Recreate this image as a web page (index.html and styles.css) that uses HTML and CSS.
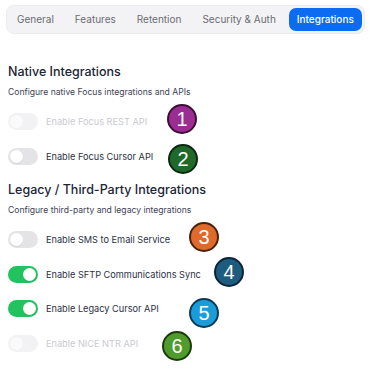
FILE: index.html
```html
<!DOCTYPE html>
<html lang="en">
<head>
  <meta charset="UTF-8" />
  <title>Settings - Integrations</title>
  <link rel="stylesheet" href="styles.css">
</head>
<body>

<div id="page">
  <!-- Onglets -->
  <div class="tabs">
    <div class="tab">General</div>
    <div class="tab">Features</div>
    <div class="tab">Retention</div>
    <div class="tab">Security &amp; Auth</div>
    <div class="tab active">Integrations</div>
  </div>

  <!-- Native -->
  <div class="section first">
    <h2>Native Integrations</h2>
    <p class="desc">Configure native Focus integrations and APIs</p>
    <div class="row disabled"><span class="switch"></span><span class="label">Enable Focus REST API</span></div>
    <div class="row"><span class="switch"></span><span class="label">Enable Focus Cursor API</span></div>
  </div>

  <!-- Legacy -->
  <div class="section">
    <h2>Legacy / Third-Party Integrations</h2>
    <p class="desc">Configure third-party and legacy integrations</p>
    <div class="row"><span class="switch"></span><span class="label">Enable SMS to Email Service</span></div>
    <div class="row"><span class="switch on"></span><span class="label">Enable SFTP Communications Sync</span></div>
    <div class="row"><span class="switch on"></span><span class="label">Enable Legacy Cursor API</span></div>
    <div class="row disabled"><span class="switch"></span><span class="label">Enable NICE NTR API</span></div>
  </div>

  <!-- Marqueurs numérotés -->
  <div class="badge b1">1</div>
  <div class="badge b2">2</div>
  <div class="badge b3">3</div>
  <div class="badge b4">4</div>
  <div class="badge b5">5</div>
  <div class="badge b6">6</div>
</div>

</body>
</html>
```

FILE: styles.css
```css
body {
  margin: 0;
  padding: 0;
  font-family: Inter, "Noto Sans", sans-serif;
  background-color: #fff;
  color: #1f2937;
}

#page {
  position: relative;
  width: 383px;
  height: 374px;
  overflow: hidden;
}

/* Barre d'onglets */
.tabs {
  display: flex;
  gap: 5px;
  width: fit-content;
  margin: 5px 0 0 6px;
  padding: 2px 2px;
  background: #f3f3f5;
  border: 1px solid #ececef;
  border-radius: 8px;
}

.tab {
  padding: 0 8px;
  height: 23px;
  line-height: 23px;
  font-size: 10px;
  color: #6b6b73;
  border-radius: 7px;
}

.tab.active {
  background: #0b6cf2;
  color: #fff;
  font-weight: 500;
}

/* Sections */
.section {
  padding: 0 8px;
  margin-top: 16px;
}

.section.first {
  margin-top: 30px;
}

.section h2 {
  margin: 0;
  font-size: 12.5px;
  line-height: 16px;
  font-weight: 500;
  color: #1c2436;
}

.desc {
  margin: 6px 0 15px;
  font-size: 8.6px;
  line-height: 12px;
  color: #3c4254;
}

.row {
  display: flex;
  align-items: center;
  gap: 8px;
  height: 17px;
  margin-bottom: 17.5px;
}

.row .label {
  font-size: 9.2px;
  color: #2b3145;
}

/* Interrupteur */
.switch {
  position: relative;
  width: 30px;
  height: 17px;
  border-radius: 9px;
  background: #e4e4e7;
  flex-shrink: 0;
}

.switch::after {
  content: "";
  position: absolute;
  top: 2px;
  left: 2px;
  width: 13px;
  height: 13px;
  border-radius: 50%;
  background: #fff;
  box-shadow: 0 1px 1px rgba(0, 0, 0, 0.08);
}

.switch.on {
  background: #22c35e;
}

.switch.on::after {
  left: 15px;
}

.row.disabled .switch {
  background: #f2f2f4;
}

.row.disabled .switch::after {
  background: #fafafa;
  box-shadow: none;
}

.row.disabled .label {
  color: #c9cad0;
}

/* Marqueurs numérotés */
.badge {
  position: absolute;
  width: 26px;
  height: 26px;
  border: 2px solid #222;
  border-radius: 50%;
  color: #fff;
  font-family: "Liberation Sans", Arial, sans-serif;
  font-size: 20px;
  line-height: 26px;
  text-align: center;
}

.b1 { left: 167px; top: 104px; background: #9b2d92; border-color: #3d0f38; }
.b2 { left: 168px; top: 144px; background: #1f6a2b; border-color: #0c2810; }
.b3 { left: 189px; top: 222px; background: #e06a2b; border-color: #4a210b; }
.b4 { left: 214px; top: 257px; background: #1d5b7f; border-color: #0b2536; }
.b5 { left: 189px; top: 298px; background: #1a9cd8; border-color: #0b3a55; }
.b6 { left: 162px; top: 331px; background: #4f9b2b; border-color: #1d3a0e; }
```
